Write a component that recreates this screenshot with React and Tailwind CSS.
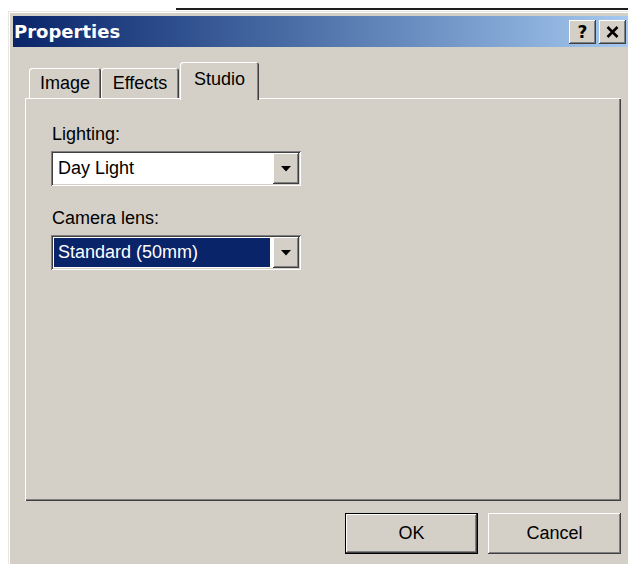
import React from "react";

const raised =
  "shadow-[inset_-1px_-1px_#404040,inset_1px_1px_#ffffff,inset_-2px_-2px_#808080,inset_2px_2px_#d4d0c8]";
const sunken =
  "shadow-[inset_1px_1px_#808080,inset_-1px_-1px_#ffffff,inset_2px_2px_#404040,inset_-2px_-2px_#d4d0c8]";

function Arrow() {
  return (
    <svg width="10" height="6" viewBox="0 0 10 6">
      <path d="M0 0 H10 L5 5.5 Z" fill="#000" />
    </svg>
  );
}

function Combo({ value, selected }) {
  return (
    <div className={`ml-[26px] flex h-[35px] w-[250px] items-stretch bg-white p-[2px] ${sunken}`}>
      <div className="flex flex-1 items-center py-[1px] pl-[1px] pr-[3px]">
        <div
          className={`flex h-full w-full items-center pl-[4px] ${
            selected ? "bg-[#0a246a] text-white" : "text-black"
          }`}
        >
          {value}
        </div>
      </div>
      <div className={`flex w-[26px] items-center justify-center bg-[#d4d0c8] ${raised}`}>
        <Arrow />
      </div>
    </div>
  );
}

function Tab({ label, active, width }) {
  return (
    <div
      className={`flex justify-center rounded-t-[3px] bg-[#d4d0c8] ${width} ${
        active
          ? "relative z-10 -mb-[2px] h-[38px] pt-[7px] shadow-[inset_1px_1px_#ffffff,inset_-1px_0_#404040,inset_-2px_0_#808080]"
          : "h-[30px] pt-[5px] shadow-[inset_1px_1px_#ffffff,inset_-1px_0_#404040,inset_-2px_0_#808080]"
      }`}
    >
      {label}
    </div>
  );
}

export default function App() {
  return (
    <div className="relative h-[564px] w-[628px] overflow-hidden bg-white font-['Liberation_Sans',Arial,sans-serif] text-[18px] leading-[21px] text-black">
      {/* edge of the window behind the dialog */}
      <div className="h-[11px] pt-[8px]">
        <div className="ml-[176px] h-[2px] bg-[#1e1e1e]" />
      </div>

      <div className="ml-[8px] h-[560px] w-[628px] border-l border-t border-[#e9e7e1] bg-[#d4d0c8] pl-[4px] pr-[5px] pt-[4px] shadow-[inset_1px_1px_#ffffff]">
        {/* caption bar */}
        <div className="flex h-[31px] items-center justify-between bg-gradient-to-r from-[#0a246a] to-[#a6caf0] pl-[1px] pr-[5px]">
          <span className="font-['DejaVu_Sans',sans-serif] text-[18px] font-bold text-white">Properties</span>
          <div className="flex gap-[3px]">
            <div className={`flex h-[24px] w-[27px] items-center justify-center bg-[#d4d0c8] pt-[1px] font-['DejaVu_Sans',sans-serif] text-[17px] font-bold ${raised}`}>
              ?
            </div>
            <div className={`flex h-[24px] w-[27px] items-center justify-center bg-[#d4d0c8] ${raised}`}>
              <svg width="13" height="12" viewBox="0 0 13 12">
                <path d="M1.5 1 L11.5 11 M11.5 1 L1.5 11" stroke="#000" strokeWidth="2.6" />
              </svg>
            </div>
          </div>
        </div>

        {/* tab strip */}
        <div className="mt-[15px] flex h-[36px] items-end pl-[16px]">
          <Tab label="Image" width="w-[72px]" />
          <Tab label="Effects" width="w-[78px]" />
          <div className="w-[1px]" />
          <Tab label="Studio" width="w-[79px]" active />
        </div>

        {/* tab page */}
        <div className="ml-[12px] h-[403px] w-[596px] pt-[26px] shadow-[inset_1px_1px_#ffffff,inset_-1px_-1px_#404040,inset_-2px_-2px_#808080]">
          <div className="ml-[27px]">Lighting:</div>
          <div className="mt-[6px]">
            <Combo value="Day Light" />
          </div>
          <div className="ml-[27px] mt-[22px]">Camera lens:</div>
          <div className="mt-[6px]">
            <Combo value="Standard (50mm)" selected />
          </div>
        </div>

        {/* dialog buttons */}
        <div className="mt-[12px] flex w-[608px] justify-end gap-[10px]">
          <div className="h-[41px] w-[133px] border border-black">
            <div className={`flex h-full w-full items-center justify-center bg-[#d4d0c8] ${raised}`}>OK</div>
          </div>
          <div className={`flex h-[41px] w-[133px] items-center justify-center bg-[#d4d0c8] ${raised}`}>Cancel</div>
        </div>
      </div>
    </div>
  );
}
